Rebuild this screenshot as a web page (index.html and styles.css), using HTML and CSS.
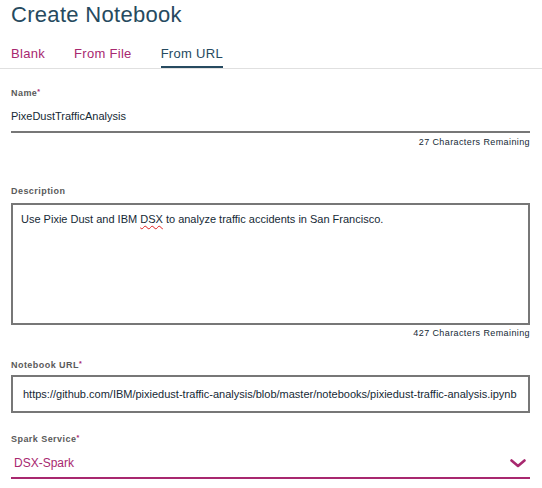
FILE: index.html
```html
<!DOCTYPE html>
<html lang="en">
<head>
<meta charset="utf-8">
<title>Create Notebook</title>
<link rel="stylesheet" href="styles.css">
</head>
<body>
<h1 class="title">Create Notebook</h1>
<nav class="tabs">
  <span class="tab">Blank</span>
  <span class="tab">From File</span>
  <span class="tab tab-active">From URL</span>
</nav>
<form class="form">
  <div class="label label-name">Name<span class="req">*</span></div>
  <div class="line-input">PixeDustTrafficAnalysis</div>
  <div class="counter">27 Characters Remaining</div>

  <div class="label label-desc">Description</div>
  <div class="textarea">Use Pixie Dust and IBM <span class="spell">DSX</span> to analyze traffic accidents in San Francisco.</div>
  <div class="counter counter-desc">427 Characters Remaining</div>

  <div class="label label-url">Notebook URL<span class="req">*</span></div>
  <div class="box-input">https://github.com/IBM/pixiedust-traffic-analysis/blob/master/notebooks/pixiedust-traffic-analysis.ipynb</div>

  <div class="label label-spark">Spark Service<span class="req">*</span></div>
  <div class="select">
    <span>DSX-Spark</span>
    <svg class="chevron" width="16" height="9" viewBox="0 0 16 9"><path d="M1.5 1.5 L8 7 L14.5 1.5" fill="none" stroke="#a8286f" stroke-width="2.6" stroke-linecap="round" stroke-linejoin="round"/></svg>
  </div>
</form>
</body>
</html>
```
FILE: styles.css
```css
* { box-sizing: border-box; }
body {
  margin: 0;
  background: #fff;
  font-family: "Liberation Sans", Arial, sans-serif;
  color: #152935;
}
.title {
  margin: 2px 0 0 11px;
  font-size: 22px;
  line-height: 25px;
  font-weight: normal;
  color: #264a60;
  letter-spacing: 0.3px;
}
.tabs {
  display: flex;
  gap: 29px;
  margin-top: 19px;
  padding-left: 11px;
  border-bottom: 1px solid #e0e0e0;
}
.tab {
  font-size: 13px;
  line-height: 16px;
  padding-bottom: 4px;
  border-bottom: 2px solid transparent;
  color: #a8286f;
  letter-spacing: 0.3px;
}
.tab-active {
  color: #264a60;
  border-bottom-color: #264a60;
}
.form {
  display: flex;
  flex-direction: column;
  padding: 0 12px 0 11px;
}
.label {
  font-size: 9px;
  line-height: 12px;
  font-weight: bold;
  color: #5a5a5a;
  letter-spacing: 0.45px;
}
.req {
  color: #a8286f;
  font-size: 7px;
  vertical-align: top;
  line-height: 9px;
}
.label-name { margin-top: 18px; }
.label-desc { margin-top: 37px; }
.label-url { margin-top: 20px; }
.label-spark { margin-top: 20px; }
.line-input {
  font-size: 11px;
  line-height: 14px;
  padding: 10px 0 8px 0;
  border-bottom: 2px solid #777;
}
.counter {
  margin-top: 3px;
  font-size: 9px;
  line-height: 12px;
  text-align: right;
  color: #152935;
  letter-spacing: 0.4px;
}
.counter-desc { margin-top: 2px; }
.textarea {
  margin-top: 6px;
  height: 122px;
  border: 2px solid #777;
  padding: 7px 8px;
  font-size: 11px;
  line-height: 14px;
}
.spell {
  text-decoration: underline wavy #e02020;
  text-decoration-thickness: 1px;
  text-underline-offset: 2px;
}
.box-input {
  margin-top: 4px;
  height: 38px;
  border: 2px solid #777;
  padding: 10px 10px;
  font-size: 11px;
  line-height: 14px;
  white-space: nowrap;
  overflow: hidden;
}
.select {
  display: flex;
  justify-content: space-between;
  align-items: center;
  padding: 11px 4px 7px 3px;
  border-bottom: 2px solid #a8286f;
  font-size: 12px;
  line-height: 14px;
  color: #a8286f;
}
.chevron { display: block; }
```
